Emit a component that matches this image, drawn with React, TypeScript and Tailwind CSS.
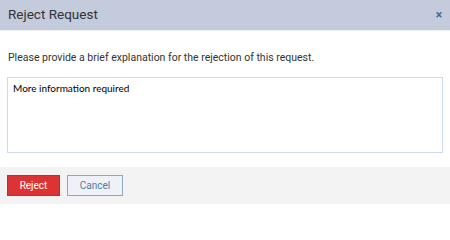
export default function App() {
  return (
    <div className="w-[450px] h-[204px] flex flex-col bg-white font-['Roboto',sans-serif] overflow-hidden">
      {/* Header */}
      <div className="h-[31px] shrink-0 flex items-center justify-between bg-[#c3cbdc] pl-2 pr-[8px] border-b border-[#eef1f6]">
        <h2 className="text-[13.5px] text-[#333] leading-none">Reject Request</h2>
        <button className="text-[#3e6b8e] text-[12px] font-bold leading-none -mt-px">×</button>
      </div>

      {/* Body */}
      <div className="flex-1 px-[7px]">
        <p className="mt-[22px] pl-px text-[10.5px] text-[#333] leading-none">
          Please provide a brief explanation for the rejection of this request.
        </p>
        <textarea
          defaultValue="More information required"
          className="mt-[13px] block w-[436px] h-[76px] resize-none border border-[#cddcf1] px-[5px] py-[3px] text-[10px] text-black font-['Lato',sans-serif] outline-none"
        />
      </div>

      {/* Footer */}
      <div className="h-[37px] shrink-0 flex items-start gap-[7px] bg-[#f3f3f3] px-[7px] pt-[8px]">
        <button className="w-[53px] h-[21px] bg-[#dc3434] border border-[#c92a2a] text-white text-[10px] leading-none">
          Reject
        </button>
        <button className="w-[56px] h-[21px] bg-[#eef2f8] border border-[#8ea8c3] text-[#56799b] text-[10px] leading-none">
          Cancel
        </button>
      </div>
    </div>
  );
}
